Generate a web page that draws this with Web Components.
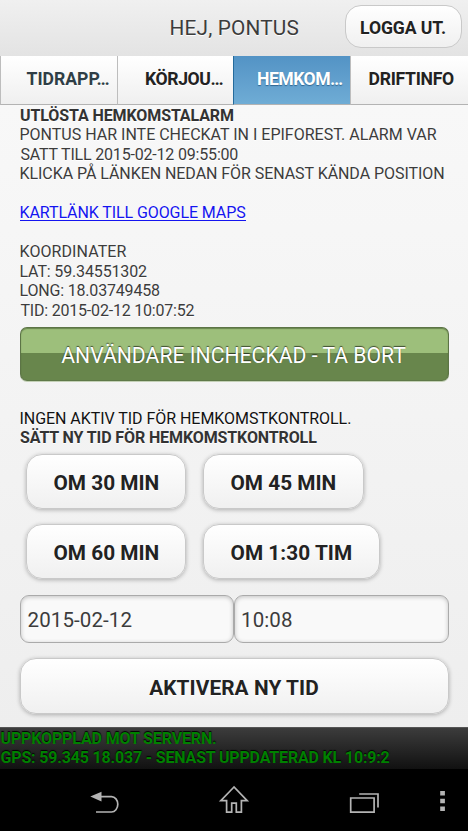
<!DOCTYPE html>
<html lang="sv">
<head>
<meta charset="utf-8">
<title>Hemkomst</title>
<style>
html,body{margin:0;padding:0;height:831px;overflow:hidden;background:#000}
body{font-family:Roboto,"Noto Sans",sans-serif;color:#333}
</style>
</head>
<body>
<home-app></home-app>
<script>
const define = (name, html, setup) => customElements.define(name, class extends HTMLElement {
  connectedCallback() {
    if (this.shadowRoot) return;
    const t = document.createElement('template');
    t.innerHTML = html;
    this.attachShadow({mode: 'open'}).append(t.content.cloneNode(true));
    if (setup) setup(this, this.shadowRoot);
  }
});

// A single line of text tracked so that its ink fills the width given in "w".
const ctx = document.createElement('canvas').getContext('2d');
define('fit-text', `<style>
:host{display:block;white-space:pre;flex:none}
span{display:inline-block}
</style><span><slot></slot></span>`, (el, root) => {
  const cs = getComputedStyle(el), text = el.textContent, w = +el.getAttribute('w');
  ctx.font = `${cs.fontWeight} ${cs.fontSize} ${cs.fontFamily}`;
  const m = ctx.measureText(text);
  const ink = m.actualBoundingBoxLeft + m.actualBoundingBoxRight;
  const span = root.querySelector('span');
  span.style.letterSpacing = ((w - ink) / (text.length - 1)).toFixed(3) + 'px';
  span.style.marginLeft = m.actualBoundingBoxLeft + 'px';
  el.style.width = w + 'px';
});

define('soft-button', `<style>
:host{display:flex;box-sizing:border-box;align-items:center;justify-content:center;height:55px;padding-top:2px;
border:1.5px solid #c9c9c9;border-radius:16px;background:linear-gradient(#fff,#f0f0f0);
box-shadow:0 1px 4px rgba(0,0,0,.28);font-weight:700;font-size:20.8px;line-height:24px;color:#222;text-shadow:0 1px 0 #fff}
</style><slot></slot>`);

define('top-bar', `<style>
:host{display:flex;height:56px;box-sizing:border-box;background:linear-gradient(#f0f0f0,#e3e3e3);padding:5px 6.5px 0 170.5px;justify-content:space-between}
.t{font-size:20.8px;line-height:24px;padding-top:11px;color:#3c3c3c;text-shadow:0 1px 0 #fff}
soft-button{width:117px;height:43px;border-radius:16px;font-size:17.6px;box-shadow:none}
</style><div class="t"><fit-text w="128">HEJ, PONTUS</fit-text></div>
<soft-button><fit-text w="84">LOGGA UT.</fit-text></soft-button>`);

define('nav-tab', `<style>
:host{display:block;box-sizing:border-box;height:49px;padding-top:13px;border-left:1px solid #bdbdbd;border-bottom:1px solid #b3b3b3;
background:linear-gradient(#fff,#efefef);font-weight:700;font-size:17.6px;line-height:21px;color:#222;text-shadow:0 1px 0 #fff}
:host([muted]){color:#2f3e46}
:host([active]){background:linear-gradient(#5393c5,#6facd5);border-left-color:#256b9c;color:#fff;text-shadow:0 1px 1px #2f6590}
</style><slot></slot>`);

define('tab-strip', `<style>
:host{display:grid;grid-template-columns:117px 116px 117px 118px}
</style>
<nav-tab muted style="padding-left:25.5px"><fit-text w="82">TIDRAPP…</fit-text></nav-tab>
<nav-tab style="padding-left:28px"><fit-text w="76.5">KÖRJOU…</fit-text></nav-tab>
<nav-tab active style="padding-left:24px"><fit-text w="84">HEMKOM…</fit-text></nav-tab>
<nav-tab style="padding-left:18.5px"><fit-text w="84.5">DRIFTINFO</fit-text></nav-tab>`);

define('alarm-info', `<style>
:host{display:block;font-size:16px;line-height:19.5px;text-shadow:0 1px 0 #fff;color:#3c3c3c;padding-left:1px}
b{display:block;color:#333;margin-left:-.5px}
.gap{height:19.5px}
</style>
<b><fit-text w="213">UTLÖSTA HEMKOMSTALARM</fit-text></b>
<fit-text w="416.5">PONTUS HAR INTE CHECKAT IN I EPIFOREST. ALARM VAR</fit-text>
<fit-text w="218.5">SATT TILL 2015-02-12 09:55:00</fit-text>
<fit-text w="424">KLICKA PÅ LÄNKEN NEDAN FÖR SENAST KÄNDA POSITION</fit-text>
<div class="gap"></div>
<text-link></text-link>
<div class="gap"></div>
<fit-text w="106">KOORDINATER</fit-text>
<fit-text w="126.5">LAT: 59.34551302</fit-text>
<fit-text w="139.5">LONG: 18.03749458</fit-text>
<fit-text w="174">TID: 2015-02-12 10:07:52</fit-text>`);

define('text-link', `<style>
:host{display:block;height:19.5px;color:#1414f0}
div{width:226px;height:17px;border-bottom:1px solid #1414f0;margin-left:-1px}
fit-text{margin-left:1px}
</style><div><fit-text w="225">KARTLÄNK TILL GOOGLE MAPS</fit-text></div>`);

define('confirm-button', `<style>
:host{display:flex;box-sizing:border-box;height:53.5px;justify-content:center;padding-top:15px;
border:1px solid #5c7446;border-bottom-color:#5f7948;border-radius:7px;background:linear-gradient(#9dbf7b 0 49%,#68864c 49%);
box-shadow:inset 0 1px 1px rgba(40,60,20,.45),0 1px 0 #c3d0b6;
color:#fff;font-size:21.2px;line-height:25px;text-shadow:0 -1px 1px rgba(0,0,0,.6)}
</style><fit-text w="345.5">ANVÄNDARE INCHECKAD - TA BORT</fit-text>`);

define('text-field', `<style>
:host{display:block;box-sizing:border-box;height:48px;border:1.5px solid #aaa;border-radius:9px;background:#f9f9f9;
box-shadow:inset 0 1px 4px rgba(0,0,0,.22);padding:12px 0 0 7px;font-size:20.5px;line-height:24px;color:#3c3c3c}
</style><slot></slot>`);

define('time-picker', `<style>
:host{display:block}
.txt{font-size:16px;line-height:19.5px;color:#111;text-shadow:0 1px 0 #fff;padding-left:.5px}
.txt>fit-text{margin-left:.5px}
b{display:block;color:#333}
.row{display:flex;gap:17px;padding-left:6.5px;margin-top:15px}
.row.first{margin-top:6.5px}
.fields{display:grid;grid-template-columns:1fr 1fr;margin-top:16px}
.go{margin-top:15px}
</style>
<div class="txt"><fit-text w="330">INGEN AKTIV TID FÖR HEMKOMSTKONTROLL.</fit-text>
<b><fit-text w="298">SÄTT NY TID FÖR HEMKOMSTKONTROLL</fit-text></b></div>
<div class="row first"><soft-button style="width:160px"><fit-text w="105">OM 30 MIN</fit-text></soft-button>
<soft-button style="width:161px;padding-right:1px"><fit-text w="105">OM 45 MIN</fit-text></soft-button></div>
<div class="row"><soft-button style="width:160px"><fit-text w="105">OM 60 MIN</fit-text></soft-button>
<soft-button style="width:177px;padding-right:1px"><fit-text w="121">OM 1:30 TIM</fit-text></soft-button></div>
<div class="fields"><text-field><fit-text w="104">2015-02-12</fit-text></text-field>
<text-field><fit-text w="50">10:08</fit-text></text-field></div>
<soft-button class="go" style="height:56px;padding-top:3px"><fit-text w="169.5">AKTIVERA NY TID</fit-text></soft-button>`);

define('status-bar', `<style>
:host{display:block;box-sizing:border-box;height:42px;border-top:1px solid #555;padding:.5px 0 0 .5px;background:linear-gradient(#3c3c3c,#111);
font-weight:700;font-size:16px;line-height:19.5px;color:#008000;text-shadow:0 -1px 1px #000}
</style><fit-text w="216">UPPKOPPLAD MOT SERVERN.</fit-text><fit-text w="389.5">GPS: 59.345 18.037 - SENAST UPPDATERAD KL 10:9:2</fit-text>`);

define('system-nav', `<style>
:host{display:block;height:62px;background:#000}svg{display:block}
</style><svg width="468" height="62" viewBox="0 769 468 62" fill="none" stroke="#b4b4b4" stroke-width="1.7">
<path d="M96 812h15.5a6.3 7.7 0 0 0 0-15.4H101"/><path d="M90.3 796.6l11.2-4.8v9.6z" fill="#b4b4b4" stroke="none"/>
<path d="M234 787l-13.2 13.7h5.8v11.5h5.1v-9h4.6v9h5.1v-11.5h5.8z"/>
<path d="M350.7 798h23.4v14.2h-23.4zM359.2 794h18.8v13.5"/>
<path d="M440.2 791h4.7v4.5h-4.7zM440.2 798.7h4.7v4.5h-4.7zM440.2 806.5h4.7v4.5h-4.7z" fill="#b4b4b4" stroke="none"/></svg>`);

define('home-app', `<style>
:host{display:flex;flex-direction:column;width:468px;height:831px;overflow:hidden}
main{box-sizing:border-box;height:622px;padding:.5px 19.5px 0;background:linear-gradient(#f8f8f8,#eee)}
confirm-button{margin-top:7px}
time-picker{margin-top:28px}
</style><top-bar></top-bar><tab-strip></tab-strip>
<main><alarm-info></alarm-info><confirm-button></confirm-button><time-picker></time-picker></main>
<status-bar></status-bar><system-nav></system-nav>`);
</script>
</body>
</html>
